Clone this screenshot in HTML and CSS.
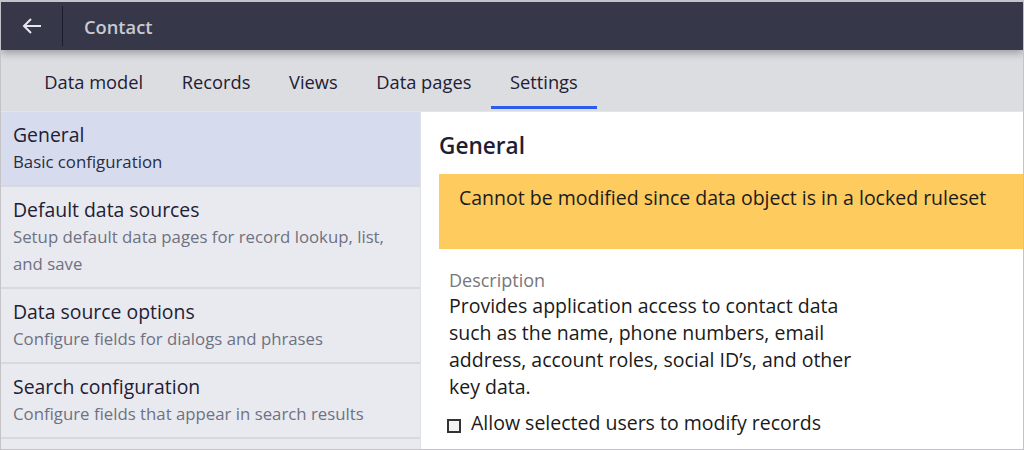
FILE: index.html
```html
<!DOCTYPE html>
<html lang="en">
<head>
  <meta charset="UTF-8" />
  <title>Contact - Settings</title>
  <link rel="stylesheet" href="styles.css">
</head>
<body>
<div class="frame">

  <!-- Top header -->
  <header class="header">
    <button class="back" aria-label="Back">
      <svg width="20" height="16" viewBox="0 0 20 16">
        <path d="M9 1 L2 8 L9 15 M2 8 H19" fill="none" stroke="#e6e7ee" stroke-width="2"/>
      </svg>
    </button>
    <div class="title">Contact</div>
  </header>

  <nav class="tabs">
    <div class="tab">Data model</div>
    <div class="tab">Records</div>
    <div class="tab">Views</div>
    <div class="tab">Data pages</div>
    <div class="tab active">Settings</div>
  </nav>

  <div class="body">
    <aside class="sidebar">
      <div class="item selected">
        <div class="item-title">General</div>
        <div class="item-sub">Basic configuration</div>
      </div>
      <div class="item">
        <div class="item-title">Default data sources</div>
        <div class="item-sub">Setup default data pages for record lookup, list, and save</div>
      </div>
      <div class="item">
        <div class="item-title">Data source options</div>
        <div class="item-sub">Configure fields for dialogs and phrases</div>
      </div>
      <div class="item">
        <div class="item-title">Search configuration</div>
        <div class="item-sub">Configure fields that appear in search results</div>
      </div>
      <div class="item"></div>
    </aside>

    <main class="content">
      <h2>General</h2>
      <div class="warning">Cannot be modified since data object is in a locked ruleset</div>
      <div class="field">
        <div class="label">Description</div>
        <div class="value">Provides application access to contact data such as the name, phone numbers, email address, account roles, social ID’s, and other key data.</div>
      </div>
      <label class="check">
        <span class="box"></span>
        Allow selected users to modify records
      </label>
    </main>
  </div>

</div>
</body>
</html>
```

FILE: styles.css
```css
body {
  margin: 0;
  font-family: 'Open Sans', 'Noto Sans', sans-serif;
  color: #1e2035;
}
.frame {
  width: 1024px;
  height: 450px;
  box-sizing: border-box;
  border: 1px solid #c4c4c8;
  border-top-width: 2px;
  overflow: hidden;
  display: flex;
  flex-direction: column;
  background: #fff;
}

/* header */
.header {
  height: 48px;
  flex-shrink: 0;
  background: #363749;
  display: flex;
  align-items: center;
  position: relative;
  z-index: 2;
  box-shadow: 0 3px 8px rgba(0,0,0,0.3);
}
.back {
  width: 62px;
  height: 40px;
  background: none;
  border: none;
  border-right: 1px solid #1c1d2b;
  display: flex;
  align-items: center;
  justify-content: center;
  padding: 0;
}
.title {
  margin-left: 21px;
  color: #c9cad3;
  font-size: 18.3px;
  font-weight: 600;
}

/* tabs */
.tabs {
  height: 61px;
  flex-shrink: 0;
  background: #dcdde1;
  display: flex;
  padding-left: 24px;
  border-bottom: 1px solid #e4e5e9;
}
.tab {
  padding: 0 19.3px;
  font-size: 18.3px;
  line-height: 64px;
  color: #1e2035;
  box-sizing: border-box;
  height: 59px;
}
.tab.active {
  border-bottom: 3px solid #2d5bef;
}

/* main body */
.body {
  flex: 1;
  display: flex;
  min-height: 0;
}
.sidebar {
  width: 419px;
  flex-shrink: 0;
  background: #e9eaef;
  border-right: 1px solid #dfe0e6;
}
.item {
  padding: 9px 12px 10px;
  border-bottom: 2px solid #d8d9de;
}
.item.selected {
  background: #d6dcee;
}
.item-title {
  font-size: 19.4px;
  line-height: 27px;
}
.item-sub {
  font-size: 16.8px;
  line-height: 27px;
  color: #6f7182;
  padding-right: 20px;
}
.item.selected .item-sub {
  color: #2a2c40;
}

.content {
  flex: 1;
  padding: 18px 0 0 18px;
}
.content h2 {
  margin: 0 0 12px;
  font-size: 22.6px;
  font-weight: 600;
  line-height: 32px;
  color: #1e1f33;
}
.warning {
  background: #fecb5e;
  height: 75px;
  box-sizing: border-box;
  padding: 10px 20px;
  font-size: 19.5px;
  line-height: 27px;
  color: #1c1c1c;
}
.field {
  margin: 19px 0 0 10px;
}
.label {
  font-size: 18px;
  line-height: 24px;
  color: #77777c;
}
.value {
  font-size: 19.5px;
  line-height: 27px;
  max-width: 412px;
  color: #1a1a1a;
}
.check {
  display: flex;
  align-items: center;
  gap: 10px;
  margin: 9px 0 0 8px;
  font-size: 19.5px;
  line-height: 27px;
  color: #1a1a1a;
}
.box {
  width: 10px;
  height: 10px;
  border: 2px solid #333;
  background: #f4f4f4;
  margin-top: 6px;
}
```
